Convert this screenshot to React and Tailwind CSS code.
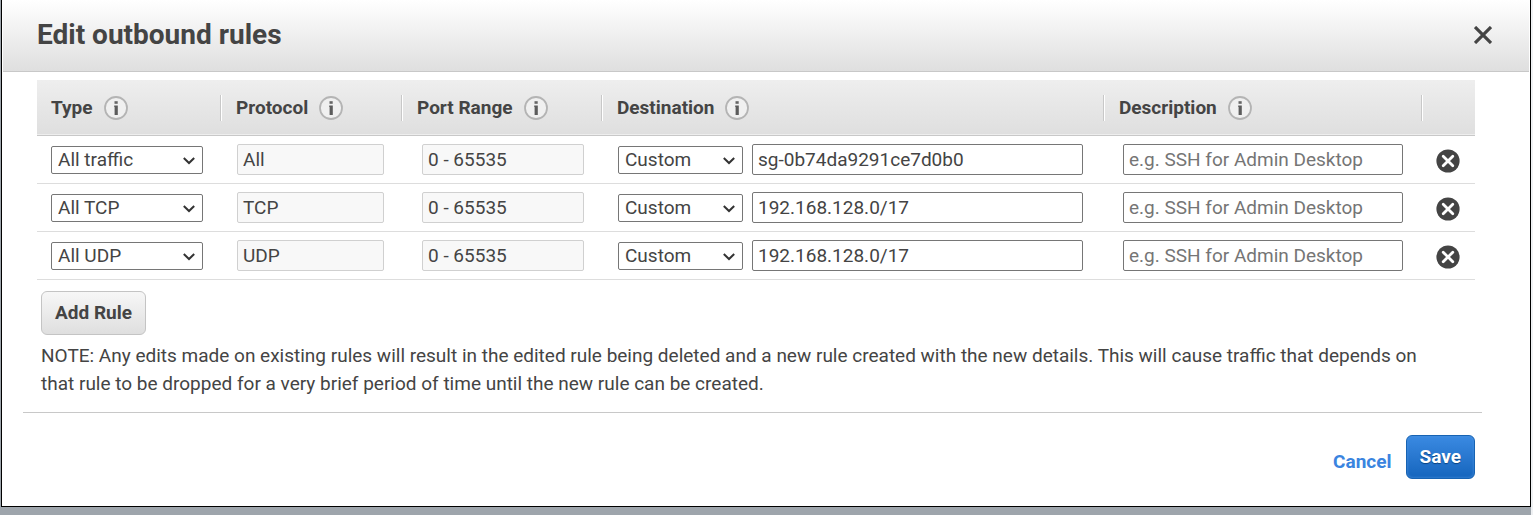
import React, { useState } from "react";

const columns = [
  { label: "Type", width: "w-[184px]", pad: "pl-[14px]" },
  { label: "Protocol", width: "w-[181px]", pad: "pl-[15px]" },
  { label: "Port Range", width: "w-[200px]", pad: "pl-[15px]" },
  { label: "Destination", width: "", pad: "pl-[15px]" },
  { label: "Description", width: "w-[318px]", pad: "pl-[15px]" },
];

const initialRules = [
  {
    id: 1,
    type: "All traffic",
    protocol: "All",
    ports: "0 - 65535",
    destination: "sg-0b74da9291ce7d0b0",
  },
  {
    id: 2,
    type: "All TCP",
    protocol: "TCP",
    ports: "0 - 65535",
    destination: "192.168.128.0/17",
  },
  {
    id: 3,
    type: "All UDP",
    protocol: "UDP",
    ports: "0 - 65535",
    destination: "192.168.128.0/17",
  },
];

const InfoIcon = () => (
  <svg width="24" height="24" viewBox="0 0 24 24" aria-hidden="true">
    <circle cx="12" cy="12" r="11" fill="#f0f0f0" stroke="#b4b4b4" strokeWidth="1.8" />
    <rect x="10.5" y="5.2" width="3.2" height="2.6" fill="#666" />
    <path d="M10.2 9.6h3.6V19h-3.2v-8h-.4z" fill="#5c5c5c" />
  </svg>
);

const CloseIcon = () => (
  <svg width="18" height="18" viewBox="0 0 18 18" aria-hidden="true">
    <path d="M1 1l16 16M17 1L1 17" stroke="#444" strokeWidth="3.2" />
  </svg>
);

const RemoveIcon = () => (
  <svg width="24" height="24" viewBox="0 0 24 24" aria-hidden="true">
    <circle cx="12" cy="12" r="11.6" fill="#444" />
    <path
      d="M7.2 7.2l9.6 9.6M16.8 7.2l-9.6 9.6"
      stroke="#fff"
      strokeWidth="2.8"
      strokeLinecap="round"
    />
  </svg>
);

const SelectBox = ({ label, value, options, width, onChange }) => (
  <div className={`relative mt-px h-7 shrink-0 ${width}`}>
    <select
      aria-label={label}
      value={value}
      onChange={(e) => onChange(e.target.value)}
      className="block h-full w-full appearance-none rounded-[2px] border border-[#767676] bg-white pl-1.5 leading-6"
    >
      {options.map((option) => (
        <option key={option}>{option}</option>
      ))}
    </select>
    <svg
      className="pointer-events-none absolute top-[11px] right-2"
      width="12"
      height="8"
      viewBox="0 0 12 8"
      aria-hidden="true"
    >
      <path d="M.8 1L6 6l5.2-5" fill="none" stroke="#333" strokeWidth="2" />
    </svg>
  </div>
);

const TextBox = ({ label, disabled, className, ...props }) => (
  <input
    type="text"
    aria-label={label}
    disabled={disabled}
    className={`block h-[31px] rounded-[2px] border pl-[5px] placeholder:text-[#757575] ${
      disabled ? "border-[#d0d0d0] bg-[#f8f8f8]" : "border-[#767676] bg-white"
    } ${className}`}
    {...props}
  />
);

const App = () => {
  const [rules, setRules] = useState(initialRules);

  const updateRule = (id, changes) =>
    setRules(rules.map((r) => (r.id === id ? { ...r, ...changes } : r)));

  const addRule = () =>
    setRules([
      ...rules,
      {
        id: Date.now(),
        type: "All traffic",
        protocol: "All",
        ports: "0 - 65535",
        destination: "",
      },
    ]);

  return (
    <div className="min-h-screen border-r-2 border-[#eff1f3] bg-[#9ea5ac] pl-px font-[Roboto,sans-serif] text-[19px] text-[#444]">
      <div
        role="dialog"
        aria-labelledby="dialog-title"
        className="border-x border-b border-black bg-white"
      >
        <header className="mx-px flex h-[72px] items-center justify-between border-b border-[#c8c8c8] bg-linear-to-b from-white to-[#dfdfdf] pr-[37px] pb-0.5 pl-[34px]">
          <h1 id="dialog-title" className="text-[28px] font-bold">
            Edit outbound rules
          </h1>
          <button type="button" aria-label="Close">
            <CloseIcon />
          </button>
        </header>

        <div className="pt-2 pr-[55px] pl-[35px]">
          <table className="w-full table-fixed border-collapse">
            <thead>
              <tr className="h-[55px] border-b border-[#c8c8c8] bg-linear-to-b from-[#eee] to-[#dfdfdf]">
                {columns.map((col) => (
                  <th
                    key={col.label}
                    scope="col"
                    className={`px-0 pt-0.5 pb-0 text-left font-bold ${col.width}`}
                  >
                    <div
                      className={`flex h-[26px] items-center gap-[11px] border-r border-[#c8c8c8] shadow-[1px_0_0_#fff] ${col.pad}`}
                    >
                      {col.label}
                      <InfoIcon />
                    </div>
                  </th>
                ))}
                <th className="w-[53px] p-0" aria-label="Remove"></th>
              </tr>
            </thead>
            <tbody>
              {rules.map((rule) => (
                <tr key={rule.id} className="h-12 border-b border-[#ddd]">
                  <td className="pl-[14px]">
                    <SelectBox
                      label="Type"
                      width="w-[152px]"
                      value={rule.type}
                      options={["All traffic", "All TCP", "All UDP"]}
                      onChange={(type) => updateRule(rule.id, { type })}
                    />
                  </td>
                  <td className="pl-4">
                    <TextBox
                      label="Protocol"
                      className="w-[147px]"
                      value={rule.protocol}
                      disabled
                    />
                  </td>
                  <td className="pl-5">
                    <TextBox
                      label="Port Range"
                      className="w-[162px]"
                      value={rule.ports}
                      disabled
                    />
                  </td>
                  <td className="pr-[21px] pl-4">
                    <div className="flex items-center gap-[9px]">
                      <SelectBox
                        label="Destination type"
                        width="w-[125px]"
                        value="Custom"
                        options={["Custom"]}
                        onChange={() => {}}
                      />
                      <TextBox
                        label="Destination"
                        className="min-w-0 flex-1"
                        value={rule.destination}
                        onChange={(e) =>
                          updateRule(rule.id, { destination: e.target.value })
                        }
                      />
                    </div>
                  </td>
                  <td className="pr-[19px] pl-[19px]">
                    <TextBox
                      label="Description"
                      className="w-full"
                      placeholder="e.g. SSH for Admin Desktop"
                    />
                  </td>
                  <td className="pt-1 pl-[14px]">
                    <button
                      type="button"
                      aria-label="Remove rule"
                      className="block"
                      onClick={() =>
                        setRules(rules.filter((r) => r.id !== rule.id))
                      }
                    >
                      <RemoveIcon />
                    </button>
                  </td>
                </tr>
              ))}
            </tbody>
          </table>

          <div className="pt-[11px] pl-1">
            <button
              type="button"
              onClick={addRule}
              className="block h-11 rounded-md border border-[#c4c4c4] bg-linear-to-b from-[#f7f7f7] to-[#dfdfdf] px-[13px] pt-0.5 font-bold"
            >
              Add Rule
            </button>
            <p className="mt-[7px] pr-10 leading-7">
              NOTE: Any edits made on existing rules will result in the edited
              rule being deleted and a new rule created with the new details.
              This will cause traffic that depends on that rule to be dropped
              for a very brief period of time until the new rule can be created.
            </p>
          </div>
        </div>

        <footer className="mt-[14px] mr-12 ml-[21px] flex items-center justify-end gap-3.5 border-t border-[#c8c8c8] pt-[22px] pr-[7px] pb-[27px]">
          <a href="#cancel" className="pt-3 font-bold text-[#3a84df]">
            Cancel
          </a>
          <button
            type="button"
            className="h-11 rounded-md border border-[#1763b3] bg-linear-to-b from-[#3a8ae2] to-[#1465bd] px-[13px] pt-0.5 font-bold text-white inset-shadow-[0_0_3px_#4a90dd] text-shadow-[0_1px_1px_#0c4482]"
          >
            Save
          </button>
        </footer>
      </div>
    </div>
  );
};

export default App;
